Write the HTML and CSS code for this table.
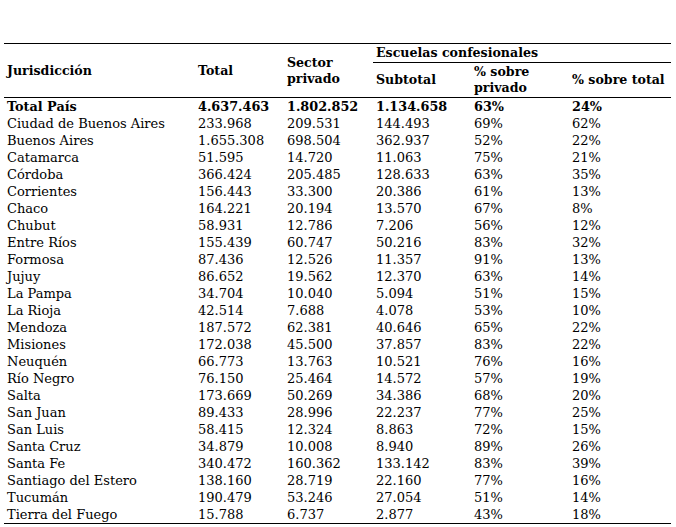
FILE: index.html
```html
<!DOCTYPE html>
<html lang="es">
<head>
<meta charset="utf-8">
<title>Escuelas confesionales</title>
<link rel="stylesheet" href="styles.css">
</head>
<body>
<table class="data">
  <colgroup>
    <col class="c1"><col class="c2"><col class="c3"><col class="c4"><col class="c5"><col class="c6">
  </colgroup>
  <thead>
    <tr class="h1">
      <th rowspan="2" class="mid">Jurisdicción</th>
      <th rowspan="2" class="mid">Total</th>
      <th rowspan="2" class="mid">Sector<br>privado</th>
      <th colspan="3" class="group">Escuelas confesionales</th>
    </tr>
    <tr class="h2">
      <th>Subtotal</th>
      <th>% sobre<br>privado</th>
      <th>% sobre total</th>
    </tr>
  </thead>
  <tbody>
    <tr class="total"><td>Total País</td><td>4.637.463</td><td>1.802.852</td><td>1.134.658</td><td>63%</td><td>24%</td></tr>
    <tr><td>Ciudad de Buenos Aires</td><td>233.968</td><td>209.531</td><td>144.493</td><td>69%</td><td>62%</td></tr>
    <tr><td>Buenos Aires</td><td>1.655.308</td><td>698.504</td><td>362.937</td><td>52%</td><td>22%</td></tr>
    <tr><td>Catamarca</td><td>51.595</td><td>14.720</td><td>11.063</td><td>75%</td><td>21%</td></tr>
    <tr><td>Córdoba</td><td>366.424</td><td>205.485</td><td>128.633</td><td>63%</td><td>35%</td></tr>
    <tr><td>Corrientes</td><td>156.443</td><td>33.300</td><td>20.386</td><td>61%</td><td>13%</td></tr>
    <tr><td>Chaco</td><td>164.221</td><td>20.194</td><td>13.570</td><td>67%</td><td>8%</td></tr>
    <tr><td>Chubut</td><td>58.931</td><td>12.786</td><td>7.206</td><td>56%</td><td>12%</td></tr>
    <tr><td>Entre Ríos</td><td>155.439</td><td>60.747</td><td>50.216</td><td>83%</td><td>32%</td></tr>
    <tr><td>Formosa</td><td>87.436</td><td>12.526</td><td>11.357</td><td>91%</td><td>13%</td></tr>
    <tr><td>Jujuy</td><td>86.652</td><td>19.562</td><td>12.370</td><td>63%</td><td>14%</td></tr>
    <tr><td>La Pampa</td><td>34.704</td><td>10.040</td><td>5.094</td><td>51%</td><td>15%</td></tr>
    <tr><td>La Rioja</td><td>42.514</td><td>7.688</td><td>4.078</td><td>53%</td><td>10%</td></tr>
    <tr><td>Mendoza</td><td>187.572</td><td>62.381</td><td>40.646</td><td>65%</td><td>22%</td></tr>
    <tr><td>Misiones</td><td>172.038</td><td>45.500</td><td>37.857</td><td>83%</td><td>22%</td></tr>
    <tr><td>Neuquén</td><td>66.773</td><td>13.763</td><td>10.521</td><td>76%</td><td>16%</td></tr>
    <tr><td>Río Negro</td><td>76.150</td><td>25.464</td><td>14.572</td><td>57%</td><td>19%</td></tr>
    <tr><td>Salta</td><td>173.669</td><td>50.269</td><td>34.386</td><td>68%</td><td>20%</td></tr>
    <tr><td>San Juan</td><td>89.433</td><td>28.996</td><td>22.237</td><td>77%</td><td>25%</td></tr>
    <tr><td>San Luis</td><td>58.415</td><td>12.324</td><td>8.863</td><td>72%</td><td>15%</td></tr>
    <tr><td>Santa Cruz</td><td>34.879</td><td>10.008</td><td>8.940</td><td>89%</td><td>26%</td></tr>
    <tr><td>Santa Fe</td><td>340.472</td><td>160.362</td><td>133.142</td><td>83%</td><td>39%</td></tr>
    <tr><td>Santiago del Estero</td><td>138.160</td><td>28.719</td><td>22.160</td><td>77%</td><td>16%</td></tr>
    <tr><td>Tucumán</td><td>190.479</td><td>53.246</td><td>27.054</td><td>51%</td><td>14%</td></tr>
    <tr class="last"><td>Tierra del Fuego</td><td>15.788</td><td>6.737</td><td>2.877</td><td>43%</td><td>18%</td></tr>
  </tbody>
</table>
</body>
</html>
```

FILE: styles.css
```css
html, body {
  margin: 0;
  background: #ffffff;
}
body {
  padding: 43px 5px 0 4px;
  font-family: "DejaVu Serif", serif;
  font-size: 13px;
  color: #000000;
}
.data {
  border-collapse: collapse;
  width: 667px;
  table-layout: fixed;
}
.c1 { width: 191px; }
.c2 { width: 89px; }
.c3 { width: 89px; }
.c4 { width: 98px; }
.c5 { width: 98px; }
.c6 { width: 102px; }
.data th {
  font-weight: bold;
  font-size: 12.6px;
  text-align: left;
  padding: 0 3px;
  line-height: 16px;
  vertical-align: middle;
}
.data thead .h1 th {
  border-top: 1px solid #000;
}
.data th.mid {
  border-bottom: 1px solid #000;
}
.data th.group {
  height: 18px;
  border-bottom: 1px solid #000;
}
.data .h2 th {
  height: 34px;
  border-bottom: 1px solid #000;
}
.data td {
  padding: 0 3px;
  height: 17px;
  line-height: 17px;
  white-space: nowrap;
}
.data .total td {
  font-weight: bold;
  font-size: 12.8px;
}
.data .last td {
  border-bottom: 1px solid #000;
}
```
